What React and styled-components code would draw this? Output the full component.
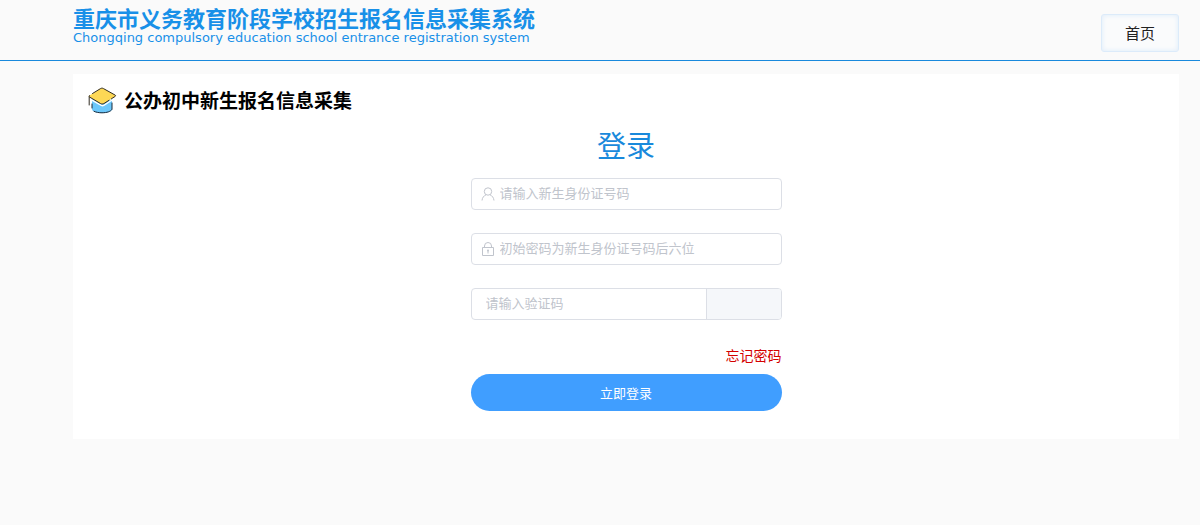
import React from "react";
import styled, { createGlobalStyle } from "styled-components";

export default function App() {
  return (
    <>
      <GlobalStyle />
      <Header>
        <Brand>
          <BrandName>重庆市义务教育阶段学校招生报名信息采集系统</BrandName>
          <BrandSub>Chongqing compulsory education school entrance registration system</BrandSub>
        </Brand>
        <HomeButton type="button">首页</HomeButton>
      </Header>
      <Panel>
        <PanelHead>
          <CapIcon />
          <PanelTitle>公办初中新生报名信息采集</PanelTitle>
        </PanelHead>
        <LoginForm onSubmit={e => e.preventDefault()}>
          <FormTitle>登录</FormTitle>
          <Field>
            <UserIcon />
            <Input type="text" aria-label="新生身份证号码" placeholder="请输入新生身份证号码" />
          </Field>
          <Field>
            <LockIcon />
            <Input type="password" aria-label="密码" placeholder="初始密码为新生身份证号码后六位" />
          </Field>
          <Field $captcha>
            <Input type="text" aria-label="验证码" placeholder="请输入验证码" />
            <Captcha />
          </Field>
          <ForgotLink href="#forgot">忘记密码</ForgotLink>
          <SubmitButton type="submit">立即登录</SubmitButton>
        </LoginForm>
      </Panel>
    </>
  );
}

function CapIcon() {
  return (
    <svg width="30" height="28" viewBox="0 0 30 28" fill="none" aria-hidden="true">
      <path d="M5 12v10c0 2.500 4.500 4 10 4s10-1.500 10-4V12L15 17z" fill="#6cc8fb" />
      <path d="M5 17v4M7 24.300c2 1 5 1.500 8 1.500 5 0 9-1.500 10-3.500V16" stroke="#1b2a3a" strokeLinecap="round" />
      <path d="M4.500 12l9.500 5.500c1 .500 2 .500 3 0L25.500 12v1.500L17 19c-1 .500-2 .500-3 0l-9-5z" fill="#fff" />
      <path d="M13.500 1.600c1-.600 2-.600 3 0L28 8c.800.400.800 1 0 1.500l-11 7c-1 .600-2.500.600-3.500 0L2.500 10c-.800-.500-.800-1 0-1.500z" fill="#fdd855" />
      <path d="M5.500 6.500l8-4.900c1-.600 2-.600 3 0L28 8c.800.400.800 1 0 1.500l-3.500 2.200M22 13.300l-5 3.200c-1 .600-2.500.600-3.500 0L2.500 10c-.800-.500-.800-1 0-1.500M2.200 10v8" stroke="#302c22" strokeLinecap="round" />
    </svg>
  );
}

function UserIcon() {
  return (
    <svg width="14" height="14" viewBox="0 0 14 14" fill="none" stroke="#c0c4cc" aria-hidden="true">
      <circle cx="7" cy="4.500" r="3.700" />
      <path d="M1 13.500c.300-3 1.800-4.600 4-5.700M13 13.500c-.300-3-1.800-4.600-4-5.700" />
    </svg>
  );
}

function LockIcon() {
  return (
    <svg width="14" height="14" viewBox="0 0 14 14" fill="none" stroke="#c0c4cc" aria-hidden="true">
      <path d="M1.500 5.500h11v8h-11zM3.500 5.500V4a3.500 3.500 0 0 1 7 0v1.500M7 9v2.500" />
      <circle cx="7" cy="8.500" r="1" fill="#c0c4cc" stroke="none" />
    </svg>
  );
}

const GlobalStyle = createGlobalStyle`
  * {
    box-sizing: border-box;
  }
  body {
    margin: 0;
    background: #fafafa;
    font-family: "Liberation Sans", "Noto Sans CJK SC", sans-serif;
  }
  button, input {
    font-family: inherit;
  }
`;

const Header = styled.header`
  display: flex;
  justify-content: space-between;
  align-items: flex-start;
  height: 61px;
  padding: 0 21px 0 73px;
  border-bottom: 1px solid #1989dc;
`;

const Brand = styled.div`
  padding-top: 8px;
  color: #1890e8;
  white-space: nowrap;
`;

const BrandName = styled.div`
  font-size: 22px;
  font-weight: 700;
  line-height: 24px;
`;

const BrandSub = styled.div`
  font-family: "DejaVu Sans", sans-serif;
  font-size: 13px;
  line-height: 12px;
`;

const HomeButton = styled.button`
  width: 78px;
  height: 38px;
  margin-top: 14px;
  padding: 0 0 2px;
  border: 1px solid #dcebfa;
  border-radius: 3px;
  background: #fafbfc;
  box-shadow: inset 0 0 5px #dcebfa;
  color: #222;
  font-size: 15px;
  cursor: pointer;
`;

const Panel = styled.main`
  margin: 13px 21px 0 73px;
  padding: 12px 14px 28px;
  background: #fff;
`;

const PanelHead = styled.div`
  display: flex;
  align-items: center;
  gap: 7px;
  height: 30px;
`;

const PanelTitle = styled.h1`
  margin: 0;
  padding-top: 2px;
  color: #000;
  font-size: 19px;
  font-weight: 700;
  line-height: 28px;
`;

const LoginForm = styled.form`
  display: flex;
  flex-direction: column;
  max-width: 311px;
  margin: 0 auto;
`;

const FormTitle = styled.h2`
  margin: 10px 0;
  color: #1989dc;
  font-size: 29px;
  font-weight: 400;
  line-height: 42px;
  text-align: center;
`;

const Field = styled.div`
  display: flex;
  align-items: center;
  gap: 5px;
  height: 32px;
  margin-bottom: 23px;
  padding-left: ${props => props.$captcha ? "14px" : "9px"};
  border: 1px solid #dcdfe6;
  border-radius: 4px;
  background: #fff;
  overflow: hidden;
`;

const Input = styled.input`
  flex: 1;
  min-width: 0;
  height: 100%;
  padding: 0 0 2px;
  border: 0;
  outline: none;
  background: transparent;
  color: #606266;
  font-size: 13px;
  &::placeholder {
    color: #c0c4cc;
  }
`;

const Captcha = styled.div`
  width: 75px;
  height: 100%;
  border-left: 1px solid #dcdfe6;
  background: #f5f7fa;
`;

const ForgotLink = styled.a`
  align-self: flex-end;
  margin: 3px 0 8px;
  color: #d40000;
  font-size: 14px;
  line-height: 20px;
  text-decoration: none;
`;

const SubmitButton = styled.button`
  height: 37px;
  border: 0;
  border-radius: 20px;
  background: #409eff;
  color: #fff;
  font-size: 13px;
  cursor: pointer;
`;
